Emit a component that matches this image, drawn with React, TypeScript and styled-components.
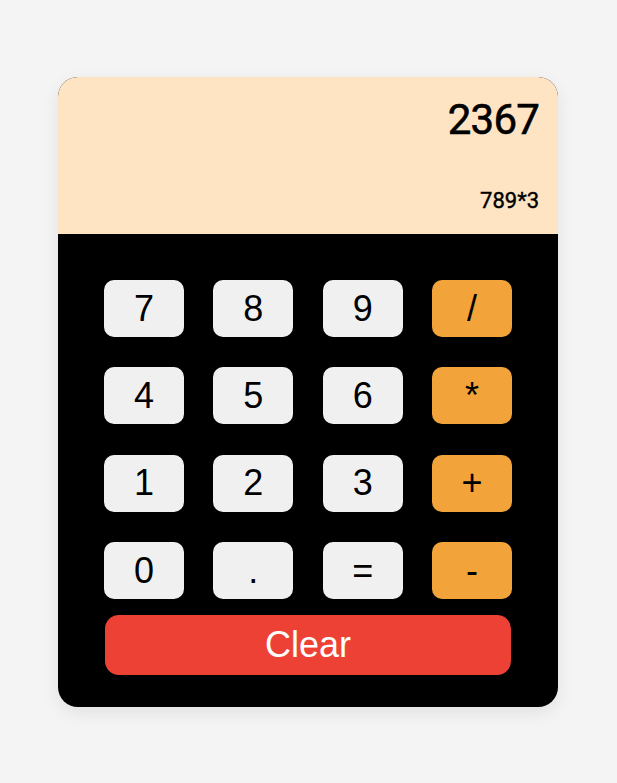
import styled, { createGlobalStyle } from "styled-components";

const GlobalStyle = createGlobalStyle`
  body {
    margin: 0;
    background: #f4f4f4;
    font-family: "Liberation Sans", Arial, sans-serif;
  }
`;

const Page = styled.div`
  min-height: 783px;
  padding-top: 77px;
  box-sizing: border-box;
  display: flex;
  justify-content: center;
`;

const Calculator = styled.div`
  width: 500px;
  height: 630px;
  margin-right: 1px;
  border-radius: 20px;
  overflow: hidden;
  background: #000;
  box-shadow: 0 6px 18px rgba(0, 0, 0, 0.08);
  display: flex;
  flex-direction: column;
`;

const Display = styled.div`
  height: 157px;
  box-sizing: border-box;
  background: #ffe4c4;
  padding: 18px 19px 20px;
  display: flex;
  flex-direction: column;
  justify-content: space-between;
  align-items: flex-end;
  font-family: Roboto, "Liberation Sans", sans-serif;
  color: #000;
`;

const Result = styled.div`
  font-size: 42px;
  font-weight: 400;
  line-height: 50px;
  letter-spacing: -0.8px;
  -webkit-text-stroke: 0.6px #000;
`;

const Expression = styled.div`
  font-size: 22px;
  font-weight: 400;
  line-height: 26px;
  -webkit-text-stroke: 0.4px #000;
`;

const Keypad = styled.div`
  flex: 1;
  padding: 46px 46px 0;
  display: grid;
  grid-template-columns: repeat(4, 80px);
  grid-auto-rows: 57px;
  justify-content: space-between;
  row-gap: 30.4px;
`;

const Key = styled.button<{ $op?: boolean }>`
  border: none;
  border-radius: 10px;
  background: ${(p) => (p.$op ? "#f2a33a" : "#f0f0f0")};
  color: #000;
  font-family: "Liberation Sans", Arial, sans-serif;
  font-size: 36px;
  padding: 0;
  cursor: pointer;
`;

const ClearKey = styled.button`
  grid-column: 1 / -1;
  margin: -14.5px 1px 0;
  height: 60px;
  border: none;
  border-radius: 14px;
  background: #ee4135;
  color: #fff;
  font-family: "Liberation Sans", Arial, sans-serif;
  font-size: 36px;
  padding: 0;
  cursor: pointer;
`;

const keys = ["7", "8", "9", "/", "4", "5", "6", "*", "1", "2", "3", "+", "0", ".", "=", "-"];
const ops = ["/", "*", "+", "-"];

export default function App() {
  return (
    <>
      <GlobalStyle />
      <Page>
        <Calculator>
          <Display>
            <Result>2367</Result>
            <Expression>789*3</Expression>
          </Display>
          <Keypad>
            {keys.map((k) => (
              <Key key={k} $op={ops.includes(k)}>
                {k}
              </Key>
            ))}
            <ClearKey>Clear</ClearKey>
          </Keypad>
        </Calculator>
      </Page>
    </>
  );
}
